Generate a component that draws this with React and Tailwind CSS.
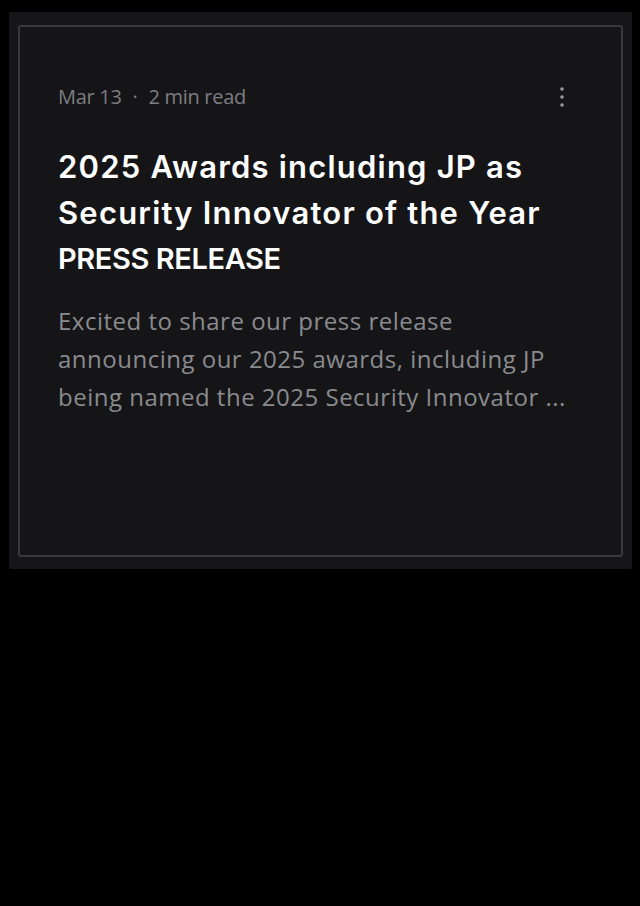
import React from "react";

export default function App() {
  return (
    <div className="min-h-[906px] w-[640px] bg-black pt-[12px] pl-[9px]">
      <div className="w-[623px] h-[557px] bg-[#161618] p-[9px] pt-[13px] pb-[12px] rounded-[2px]">
        <div className="h-full border-2 border-[#38393d] bg-[#151517] rounded-[3px] px-[38px] pt-[55px]">
          <div className="flex items-center justify-between" style={{ fontFamily: '"Open Sans", sans-serif' }}>
            <div className="flex items-center gap-[11px] text-[20px] text-[#7d7e82] tracking-[-0.3px]">
              <span>Mar 13</span>
              <span>·</span>
              <span>2 min read</span>
            </div>
            <svg width="6" height="22" viewBox="0 0 6 22" className="mr-[18px]">
              <circle cx="3" cy="3" r="1.8" fill="#9a9a9e" />
              <circle cx="3" cy="11" r="1.8" fill="#9a9a9e" />
              <circle cx="3" cy="19" r="1.8" fill="#9a9a9e" />
            </svg>
          </div>
          <h2
            className="mt-[32px] text-[31px] leading-[46px] font-semibold text-white tracking-[1.2px] whitespace-nowrap"
            style={{ fontFamily: 'Inter, sans-serif' }}
          >
            <span className="block">2025 Awards including JP as</span>
            <span className="block">Security Innovator of the Year</span>
            <span className="block text-[29px] tracking-[-0.4px]">PRESS RELEASE</span>
          </h2>
          <p
            className="mt-[20px] text-[24px] leading-[38px] text-[#8a8b8f] tracking-[0.5px] whitespace-nowrap"
            style={{ fontFamily: '"Open Sans", sans-serif' }}
          >
            Excited to share our press release
            <br />
            announcing our 2025 awards, including JP
            <br />
            being named the 2025 Security Innovator ...
          </p>
        </div>
      </div>
    </div>
  );
}
